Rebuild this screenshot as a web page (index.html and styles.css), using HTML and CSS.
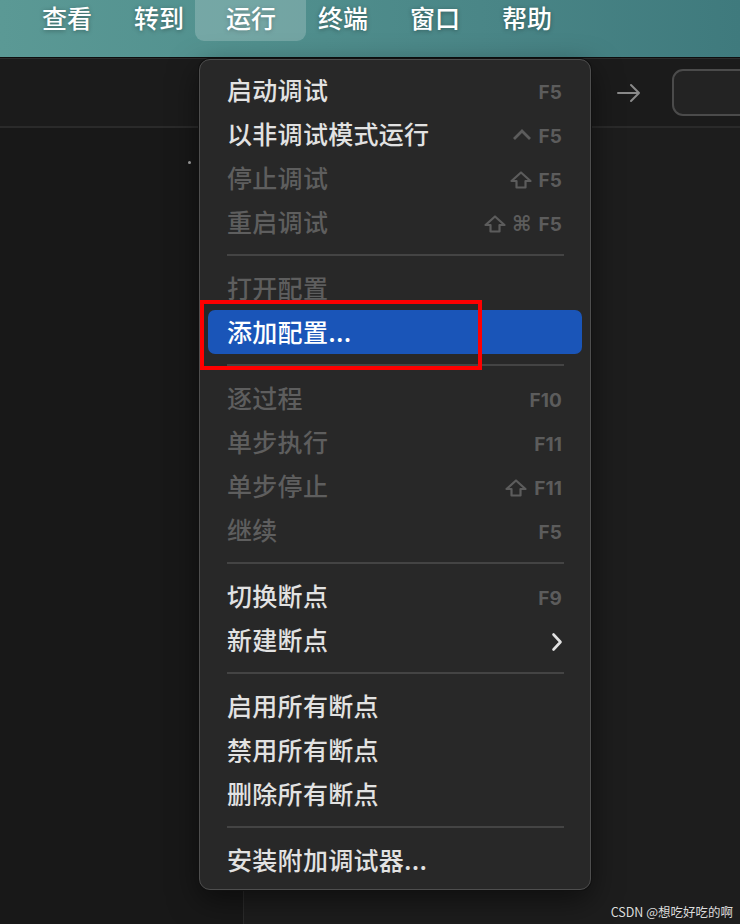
FILE: index.html
```html
<!DOCTYPE html>
<html lang="zh-CN">
<head>
<meta charset="utf-8">
<title>运行菜单</title>
<link rel="stylesheet" href="styles.css">
</head>
<body>
<div class="screen">
  <header class="menubar">
    <span class="mb-item">查看</span>
    <span class="mb-item">转到</span>
    <span class="mb-item active">运行</span>
    <span class="mb-item">终端</span>
    <span class="mb-item">窗口</span>
    <span class="mb-item">帮助</span>
  </header>
  <div class="toolbar">
    <svg class="nav-arrow" width="26" height="22" viewBox="0 0 26 22"><path d="M2 11 H23 M15 3 L23 11 L15 19" fill="none" stroke="#8a8a8a" stroke-width="2" stroke-linecap="round" stroke-linejoin="round"/></svg>
    <div class="search-box"></div>
  </div>
  <div class="workspace">
    <aside class="sidebar"><span class="dot"></span></aside>
    <main class="editor"></main>
  </div>

  <nav class="dropdown">
    <div class="row"><span class="label">启动调试</span><span class="keys"><span class="fk">F5</span></span></div>
    <div class="row"><span class="label">以非调试模式运行</span><span class="keys"><svg class="mod" width="20" height="16" viewBox="0 0 20 16"><path d="M2 11 L10 3 L18 11" fill="none" stroke="currentColor" stroke-width="2.8" stroke-linejoin="miter"/></svg><span class="fk">F5</span></span></div>
    <div class="row disabled"><span class="label">停止调试</span><span class="keys"><svg class="mod" width="22" height="18" viewBox="0 0 22 18"><path d="M11 1.5 L20.5 10 H15.5 V16.5 H6.5 V10 H1.5 Z" fill="none" stroke="currentColor" stroke-width="2.2" stroke-linejoin="round"/></svg><span class="fk">F5</span></span></div>
    <div class="row disabled"><span class="label">重启调试</span><span class="keys"><svg class="mod" width="22" height="18" viewBox="0 0 22 18"><path d="M11 1.5 L20.5 10 H15.5 V16.5 H6.5 V10 H1.5 Z" fill="none" stroke="currentColor" stroke-width="2.2" stroke-linejoin="round"/></svg><span class="cmd">⌘</span><span class="fk">F5</span></span></div>
    <div class="sep"></div>
    <div class="row disabled"><span class="label">打开配置</span></div>
    <div class="row selected"><span class="label">添加配置...</span></div>
    <div class="sep"></div>
    <div class="row disabled"><span class="label">逐过程</span><span class="keys"><span class="fk">F10</span></span></div>
    <div class="row disabled"><span class="label">单步执行</span><span class="keys"><span class="fk">F11</span></span></div>
    <div class="row disabled"><span class="label">单步停止</span><span class="keys"><svg class="mod" width="22" height="18" viewBox="0 0 22 18"><path d="M11 1.5 L20.5 10 H15.5 V16.5 H6.5 V10 H1.5 Z" fill="none" stroke="currentColor" stroke-width="2.2" stroke-linejoin="round"/></svg><span class="fk">F11</span></span></div>
    <div class="row disabled"><span class="label">继续</span><span class="keys"><span class="fk">F5</span></span></div>
    <div class="sep"></div>
    <div class="row"><span class="label">切换断点</span><span class="keys"><span class="fk">F9</span></span></div>
    <div class="row"><span class="label">新建断点</span><span class="keys"><svg class="chev" width="12" height="20" viewBox="0 0 12 20"><path d="M2.5 2.5 L9.5 10 L2.5 17.5" fill="none" stroke="currentColor" stroke-width="2.6" stroke-linecap="round" stroke-linejoin="round"/></svg></span></div>
    <div class="sep"></div>
    <div class="row"><span class="label">启用所有断点</span></div>
    <div class="row"><span class="label">禁用所有断点</span></div>
    <div class="row"><span class="label">删除所有断点</span></div>
    <div class="sep"></div>
    <div class="row"><span class="label">安装附加调试器...</span></div>
  </nav>

  <div class="annotation"></div>
  <div class="watermark">CSDN @想吃好吃的啊</div>
</div>
</body>
</html>
```

FILE: styles.css
```css
* { box-sizing: border-box; }
html, body { margin: 0; padding: 0; }
body {
  width: 740px;
  height: 924px;
  overflow: hidden;
  background: #181818;
  font-family: "Noto Sans CJK SC", "Noto Sans", sans-serif;
}
.screen {
  position: relative;
  width: 740px;
  height: 924px;
  display: flex;
  flex-direction: column;
  overflow: hidden;
}

/* top menu bar */
.menubar {
  height: 58px;
  flex: 0 0 58px;
  display: flex;
  align-items: flex-start;
  padding-left: 21px;
  background: linear-gradient(90deg, #5b9995 0%, #51908e 35%, #4a8687 65%, #3f7a7d 100%);
  border-bottom: 1px solid #0e0e0e;
}
.mb-item {
  position: relative;
  width: 92px;
  height: 41px;
  display: flex;
  align-items: center;
  justify-content: center;
  color: #ffffff;
  font-size: 25px;
  font-weight: 500;
  line-height: 1;
  padding-bottom: 7px;
  text-shadow: 0 1px 4px rgba(0, 0, 0, 0.35);
}
.mb-item.active::before {
  content: "";
  position: absolute;
  left: -10px;
  right: -9px;
  top: 0;
  bottom: 0;
  background: rgba(255, 255, 255, 0.2);
  border-radius: 0 0 9px 9px;
}

/* toolbar */
.toolbar {
  height: 70px;
  flex: 0 0 70px;
  background: #1b1b1b;
  border-top: 1px solid #2c2c2c;
  border-bottom: 2px solid #2a2a2a;
  display: flex;
  align-items: center;
  padding-left: 616px;
  gap: 30px;
}
.nav-arrow { flex: 0 0 auto; }
.search-box {
  flex: 0 0 120px;
  height: 47px;
  border: 2px solid #4b4b4b;
  border-radius: 11px;
  background: #232323;
}

/* workspace */
.workspace {
  flex: 1;
  display: flex;
}
.sidebar {
  flex: 0 0 244px;
  background: #181818;
  border-right: 1px solid #2b2b2b;
  padding-top: 33px;
}
.dot {
  display: block;
  width: 3px;
  height: 3px;
  border-radius: 50%;
  background: #a8a8a8;
  margin-left: 188px;
}
.editor {
  flex: 1;
  background: #1d1d1d;
}

/* dropdown menu */
.dropdown {
  position: absolute;
  left: 199px;
  top: 59px;
  width: 392px;
  height: 831px;
  background: #282828;
  border: 1px solid #4e4e4e;
  border-radius: 11px;
  box-shadow: 0 0 0 1px #111, 0 10px 30px rgba(0, 0, 0, 0.5);
  padding: 8px 8px 8px 8px;
  display: flex;
  flex-direction: column;
}
.row {
  height: 44px;
  flex: 0 0 44px;
  display: flex;
  align-items: center;
  justify-content: space-between;
  padding: 0 20px 0 19px;
  border-radius: 7px;
  color: #e2e2e2;
}
.label {
  font-size: 25px;
  font-weight: 500;
  line-height: 1;
  letter-spacing: 0.3px;
  padding-bottom: 2px;
}
.row.disabled .label { color: #5e5e5e; }
.row.selected {
  background: #1a55b8;
  color: #ffffff;
}
.row.selected .label { color: #ffffff; }
.keys {
  display: flex;
  align-items: center;
  gap: 7px;
  color: #5c5c5c;
  padding-top: 4px;
}
.fk {
  font-family: "Inter", "Liberation Sans", sans-serif;
  font-size: 19px;
  font-weight: 700;
  line-height: 1;
  letter-spacing: 0.1px;
}
.mod { display: block; }
.cmd {
  font-family: "DejaVu Sans", sans-serif;
  font-size: 21px;
  font-weight: 700;
  line-height: 1;
  margin-left: -1px;
}
.chev {
  display: block;
  color: #e2e2e2;
  margin-right: -1px;
}
.sep {
  flex: 0 0 22px;
  height: 22px;
  display: flex;
  align-items: center;
  padding: 0 18px 0 19px;
}
.sep::before {
  content: "";
  display: block;
  width: 100%;
  height: 2px;
  background: #444444;
}

/* red annotation rectangle drawn over the screenshot */
.annotation {
  position: absolute;
  left: 200px;
  top: 300px;
  width: 282px;
  height: 70px;
  border: 4px solid #ff0000;
}

.watermark {
  position: absolute;
  right: 7px;
  bottom: 4px;
  font-family: "Noto Sans CJK SC", "Noto Sans", sans-serif;
  font-size: 12.5px;
  color: #dcdcdc;
  line-height: 1.4;
}
```
